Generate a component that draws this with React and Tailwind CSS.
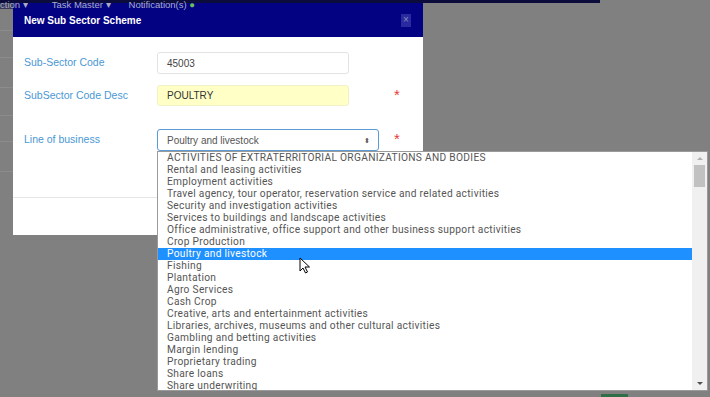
import React from 'react';

const options = [
  'ACTIVITIES OF EXTRATERRITORIAL ORGANIZATIONS AND BODIES',
  'Rental and leasing activities',
  'Employment activities',
  'Travel agency, tour operator, reservation service and related activities',
  'Security and investigation activities',
  'Services to buildings and landscape activities',
  'Office administrative, office support and other business support activities',
  'Crop Production',
  'Poultry and livestock',
  'Fishing',
  'Plantation',
  'Agro Services',
  'Cash Crop',
  'Creative, arts and entertainment activities',
  'Libraries, archives, museums and other cultural activities',
  'Gambling and betting activities',
  'Margin lending',
  'Proprietary trading',
  'Share loans',
  'Share underwriting',
];

function Field({ label, children, required }) {
  return (
    <div className="flex items-start">
      <div className="w-[133px] pt-[3px] text-[10.5px] leading-[14px] text-[#4a98d4]">{label}</div>
      <div className="relative w-[235px]">{children}</div>
      {required && <div className="w-[10px] pt-[2px] text-center text-[15px] leading-[15px] text-[#e53935]">*</div>}
    </div>
  );
}

function Dropdown() {
  return (
    <div className="absolute left-0 top-full z-20 flex h-[240px] w-[551px] border border-[#9a9a9a] bg-white">
      <div className="flex-1 overflow-hidden font-['Roboto',sans-serif]">
        {options.map((o) => {
          const active = o === 'Poultry and livestock';
          return (
            <div
              key={o}
              className={`h-[12px] whitespace-nowrap pl-[9px] text-[10.2px] leading-[12px] tracking-[0.3px] ${active ? 'bg-[#1e90ff] text-white' : 'text-[#555]'}`}
            >
              {o}
            </div>
          );
        })}
      </div>
      <div className="flex w-[15px] flex-col items-center bg-[#f0f0f0]">
        <div className="mt-[5px] h-0 w-0 border-x-[3px] border-b-[3px] border-x-transparent border-b-[#b0b0b0]" />
        <div className="mt-[5px] h-[22px] w-[11px] bg-[#c1c1c1]" />
        <div className="mt-auto mb-[5px] h-0 w-0 border-x-[3px] border-t-[3px] border-x-transparent border-t-[#505050]" />
      </div>
    </div>
  );
}

export default function App() {
  return (
    <div className="relative h-[397px] w-[710px] overflow-hidden bg-[#808080] font-['Liberation_Sans',Arial,sans-serif]">
      {/* page behind the backdrop */}
      <div className="flex h-full flex-col">
        <div className="h-[3px] w-[600px] bg-[#0b0b3c]" />
        <div className="flex flex-1 flex-col">
          <div className="h-[6px] w-[13px] bg-[#3a3a5a]" />
          {[22, 27, 30, 28, 26, 30].map((h, i) => (
            <div key={i} className="w-[13px] border-b border-[#8c8c8c]" style={{ height: h }} />
          ))}
        </div>
        <div className="ml-[601px] h-[3px] w-[27px] bg-[#2f6f47]" />
      </div>

      {/* top nav text peeking over */}
      <div className="absolute left-0 top-0 z-30 flex gap-[18px] whitespace-nowrap text-[9.5px] leading-[9px] text-[#a9adc4]">
        <span>ction ▾</span>
        <span className="ml-[6px]">Task Master ▾</span>
        <span>Notification(s) <span className="text-[#6bbf59]">●</span></span>
      </div>

      {/* modal */}
      <div className="absolute left-[13px] top-[3px] z-10 w-[410px] bg-white">
        <div className="flex h-[34px] items-center justify-between bg-[#020283] pl-[11px] pr-[12px]">
          <span className="text-[10px] font-bold text-white">New Sub Sector Scheme</span>
          <span className="flex h-[13px] w-[10px] items-center justify-center bg-[#2a2aa0] text-[10px] leading-none text-[#8a8ab8]">×</span>
        </div>
        <div className="flex flex-col pl-[11px] pt-[15px] pb-[46px]">
          <Field label="Sub-Sector Code">
            <div className="flex h-[22px] w-[192px] items-center rounded-[3px] border border-[#e3e3e3] pl-[9px] text-[10px] text-[#444]">45003</div>
          </Field>
          <div className="mt-[11px]">
            <Field label="SubSector Code Desc" required>
              <div className="flex h-[21px] w-[192px] items-center rounded-[3px] border border-[#f2f2c8] bg-[#ffffc6] pl-[9px] text-[10px] text-[#333]">POULTRY</div>
            </Field>
          </div>
          <div className="mt-[23px]">
            <Field label="Line of business" required>
              <div className="flex h-[22px] w-[222px] items-center justify-between rounded-[3px] border border-[#5b9bd5] pl-[9px] pr-[8px] text-[10px] text-[#555]">
                <span>Poultry and livestock</span>
                <span className="text-[7px] leading-[7px] text-[#555]">⬍</span>
              </div>
              <Dropdown />
            </Field>
          </div>
        </div>
        <div className="h-[38px] border-t border-[#e6e6e6]" />
      </div>

      {/* mouse pointer */}
      <svg className="absolute left-[299px] top-[257px] z-30" width="12" height="17" viewBox="0 0 12 17">
        <path d="M1 1 L1 14 L4 11 L6.5 16 L8.5 15 L6 10 L10.5 10 Z" fill="white" stroke="black" strokeWidth="1" strokeLinejoin="round" />
      </svg>
    </div>
  );
}
